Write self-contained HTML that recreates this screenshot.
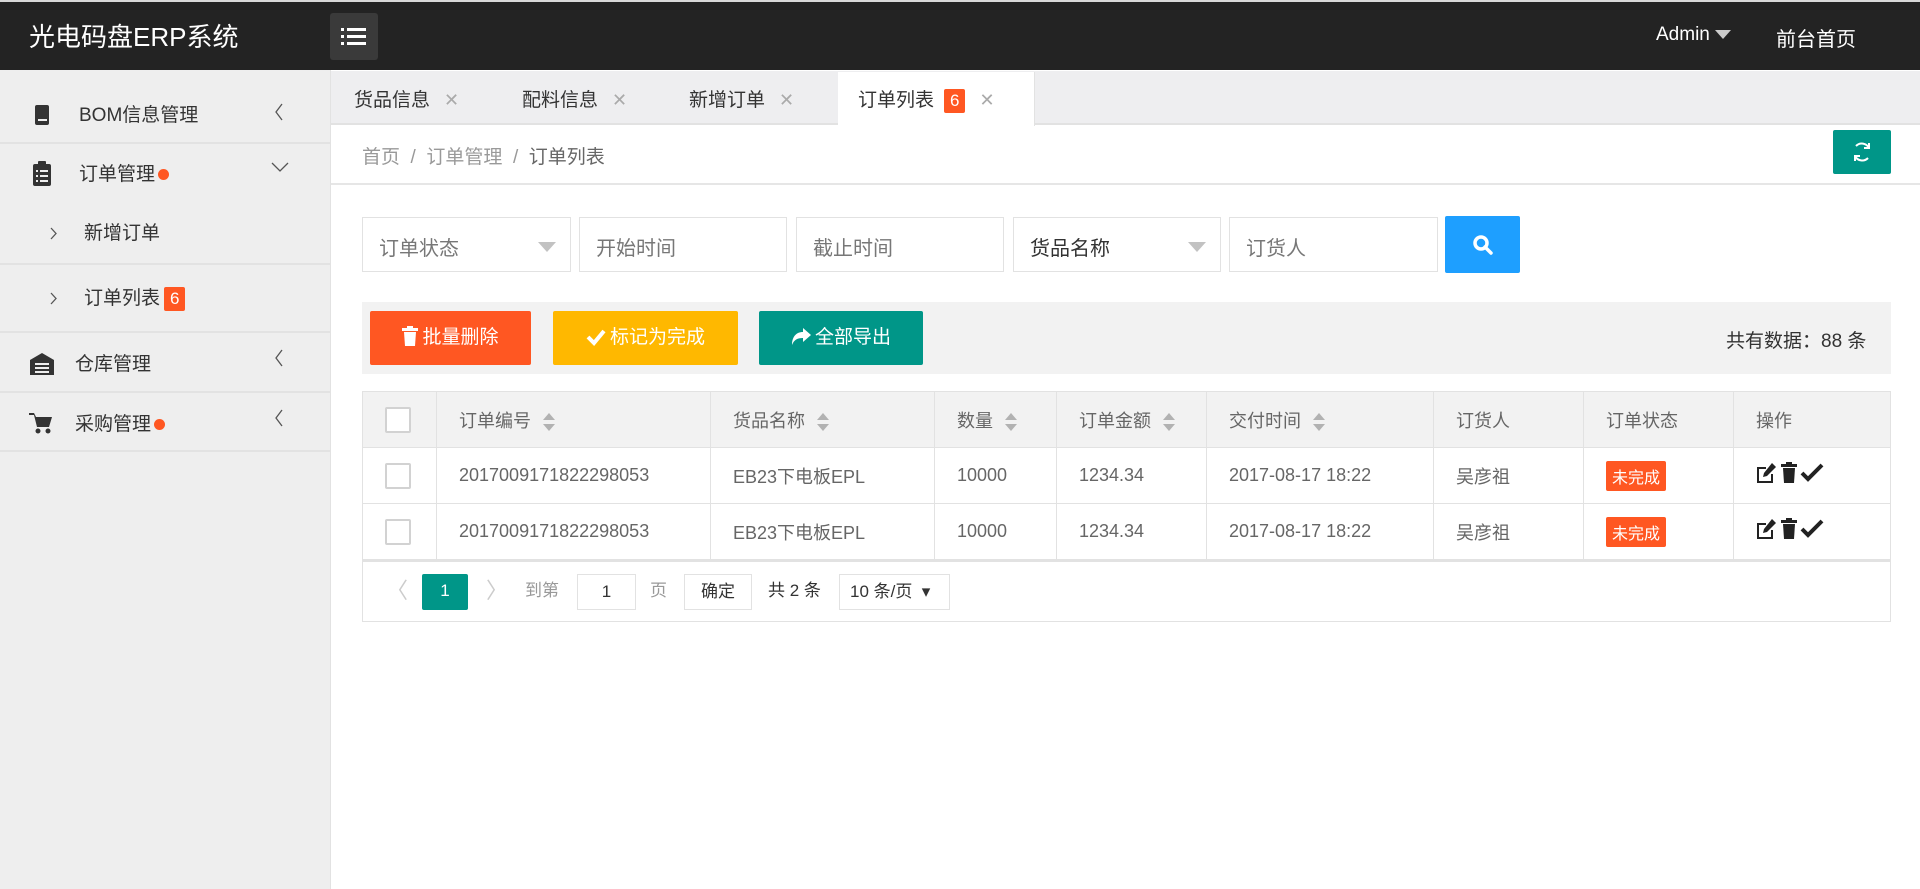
<!DOCTYPE html>
<html><head><meta charset="utf-8"><style>
*{box-sizing:border-box;margin:0;padding:0}
body{width:1920px;height:889px;overflow:hidden;background:#fff;font-family:"Liberation Sans","Noto Sans CJK SC",sans-serif;position:relative;color:#333}
.a{position:absolute}
.top{left:0;top:0;width:1920px;height:70px;background:#232323;border-top:2px solid #d8d8d8}
.side{left:0;top:70px;width:331px;height:819px;background:#eee;border-right:1px solid #e2e2e2}
.sep{position:absolute;left:0;width:331px;height:2px;background:#e2e2e2}
.si{position:absolute;font-size:19px;color:#333;line-height:24px}
.dot{display:inline-block;width:11px;height:11px;border-radius:50%;background:#ff5722;margin-left:3px;vertical-align:middle}
.bd{display:inline-block;background:#ff5722;color:#fff;border-radius:2px;padding:0 6px;font-size:17px;line-height:24px;margin-left:4px}
.tabs{left:331px;top:71px;width:1589px;height:54px;background:#eeeef0;border-bottom:2px solid #e2e2e2}
.tab{position:absolute;top:12px;font-size:19px;color:#333}
.x{color:#aaa;margin-left:14px;font-size:18px}
.inp{position:absolute;top:217px;height:55px;border:1px solid #e2e2e2;font-size:20px;color:#777;padding:14px 0 0 16px}
.tri{position:absolute;right:14px;top:24px;width:0;height:0;border-left:9px solid transparent;border-right:9px solid transparent;border-top:10px solid #c2c2c2}
.btn{position:absolute;top:311px;height:54px;color:#fff;font-size:19px;line-height:54px;text-align:center;border-radius:2px}
.btn svg{vertical-align:-3px;margin-right:4px}
table{border-collapse:collapse;position:absolute;left:362px;top:391px;width:1529px;font-size:18px;color:#666}
td,th{border:1px solid #e2e2e2;text-align:left;padding-left:22px;font-weight:normal;vertical-align:middle}
th{background:#f2f2f2;height:56px}
td{height:56px}
.cb{display:inline-block;width:26px;height:26px;border:2px solid #d2d2d2;border-radius:2px;background:#fff;vertical-align:middle}
.srt{display:inline-block;vertical-align:middle;margin-left:12px;width:12px;height:18px;position:relative}
.srt:before{content:"";position:absolute;top:0;left:0;border-left:6px solid transparent;border-right:6px solid transparent;border-bottom:7px solid #b2b2b2}
.srt:after{content:"";position:absolute;bottom:0;left:0;border-left:6px solid transparent;border-right:6px solid transparent;border-top:7px solid #b2b2b2}
.tag{display:inline-block;background:#ff5722;color:#fff;font-size:16px;padding:3px 6px;border-radius:2px}
.pg{position:absolute;top:574px;height:36px;line-height:34px;font-size:17px}
.chev{position:absolute}
</style></head><body>
<div class="a top"></div>
<div class="a" style="left:29px;top:17px;font-size:26px;color:#fff">光电码盘ERP系统</div>
<div class="a" style="left:330px;top:13px;width:48px;height:47px;background:#3a3a3a;border-radius:3px"></div>
<svg class="a" style="left:341px;top:26px" width="26" height="22" viewBox="0 0 26 22" fill="#fff"><rect x="0" y="2" width="3" height="3"/><rect x="6" y="2" width="19" height="3"/><rect x="0" y="9" width="3" height="3"/><rect x="6" y="9" width="19" height="3"/><rect x="0" y="16" width="3" height="3"/><rect x="6" y="16" width="19" height="3"/></svg>
<div class="a" style="left:1656px;top:24px;font-size:19px;color:#fff">Admin <span style="display:inline-block;border-left:8px solid transparent;border-right:8px solid transparent;border-top:9px solid #ccc;vertical-align:middle"></span></div>
<div class="a" style="left:1776px;top:23px;font-size:20px;color:#fff">前台首页</div>

<div class="a side">
<div class="sep" style="top:72px"></div>
<div class="sep" style="top:193px"></div>
<div class="sep" style="top:261px"></div>
<div class="sep" style="top:321px"></div>
<div class="sep" style="top:380px"></div>
</div>
<svg class="a" style="left:34px;top:104px" width="16" height="22" viewBox="0 0 16 22"><rect x="1" y="1" width="14" height="20" rx="2" fill="#333"/><rect x="4" y="15" width="9" height="2" fill="#eee"/></svg>
<div class="si" style="left:79px;top:104px">BOM信息管理</div>
<svg class="chev" style="left:274px;top:103px" width="10" height="18" viewBox="0 0 10 18" fill="none" stroke="#555" stroke-width="1.3"><path d="M8 1 L2 9 L8 17"/></svg>
<svg class="a" style="left:32px;top:160px" width="20" height="26" viewBox="0 0 20 26"><rect x="1" y="4" width="18" height="22" rx="2" fill="#333"/><rect x="6" y="1" width="8" height="6" rx="1" fill="#333"/><g fill="#eee"><rect x="4" y="10" width="2" height="2"/><rect x="8" y="10" width="8" height="2"/><rect x="4" y="15" width="2" height="2"/><rect x="8" y="15" width="8" height="2"/><rect x="4" y="20" width="2" height="2"/><rect x="8" y="20" width="8" height="2"/></g></svg>
<div class="si" style="left:79px;top:163px">订单管理<span class="dot"></span></div>
<svg class="chev" style="left:271px;top:162px" width="18" height="10" viewBox="0 0 18 10" fill="none" stroke="#555" stroke-width="1.3"><path d="M1 1 L9 9 L17 1"/></svg>
<svg class="chev" style="left:50px;top:227px" width="7" height="13" viewBox="0 0 7 13" fill="none" stroke="#555" stroke-width="1.3"><path d="M1 1 L6 6.5 L1 12"/></svg>
<div class="si" style="left:84px;top:222px">新增订单</div>
<svg class="chev" style="left:50px;top:292px" width="7" height="13" viewBox="0 0 7 13" fill="none" stroke="#555" stroke-width="1.3"><path d="M1 1 L6 6.5 L1 12"/></svg>
<div class="si" style="left:84px;top:287px">订单列表<span class="bd">6</span></div>
<svg class="a" style="left:29px;top:352px" width="26" height="24" viewBox="0 0 26 24"><path d="M1 8 L13 1 L25 8 V23 H1Z" fill="#333"/><g fill="#eee"><rect x="6" y="11" width="14" height="2"/><rect x="6" y="15" width="14" height="2"/><rect x="6" y="19" width="14" height="2"/></g></svg>
<div class="si" style="left:75px;top:353px">仓库管理</div>
<svg class="chev" style="left:274px;top:349px" width="10" height="18" viewBox="0 0 10 18" fill="none" stroke="#555" stroke-width="1.3"><path d="M8 1 L2 9 L8 17"/></svg>
<svg class="a" style="left:29px;top:411px" width="24" height="24" viewBox="0 0 24 24"><path d="M0 2 H5 L7 6 H23 L20 16 H8 L5 4 H0Z" fill="#333"/><circle cx="9" cy="20" r="2.5" fill="#333"/><circle cx="19" cy="20" r="2.5" fill="#333"/></svg>
<div class="si" style="left:75px;top:413px">采购管理<span class="dot"></span></div>
<svg class="chev" style="left:274px;top:409px" width="10" height="18" viewBox="0 0 10 18" fill="none" stroke="#555" stroke-width="1.3"><path d="M8 1 L2 9 L8 17"/></svg>

<div class="a tabs"></div>
<div class="a" style="left:838px;top:72px;width:197px;height:54px;background:#fff;border-right:1px solid #e2e2e2"></div>
<div class="tab a" style="left:354px;top:85px">货品信息<span class="x">✕</span></div>
<div class="tab a" style="left:522px;top:85px">配料信息<span class="x">✕</span></div>
<div class="tab a" style="left:689px;top:85px">新增订单<span class="x">✕</span></div>
<div class="tab a" style="left:858px;top:85px">订单列表<span class="bd" style="margin-left:10px">6</span><span class="x">✕</span></div>

<div class="a" style="left:362px;top:142px;font-size:19px;color:#999">首页 &nbsp;/ &nbsp;订单管理 &nbsp;/ &nbsp;<span style="color:#666">订单列表</span></div>
<div class="a" style="left:331px;top:183px;width:1589px;height:2px;background:#e6e6e6"></div>
<div class="a" style="left:1833px;top:130px;width:58px;height:44px;background:#009688;border-radius:2px"></div>
<svg class="a" style="left:1850px;top:140px" width="24" height="24" viewBox="0 0 24 24" fill="none" stroke="#fff" stroke-width="2"><path d="M6 6 A8 8 0 0 1 19 8"/><path d="M18 18 A8 8 0 0 1 5 16"/><path d="M19 3 V8 H14"/><path d="M5 21 V16 H10"/></svg>

<div class="inp" style="left:362px;width:209px">订单状态<span class="tri"></span></div>
<div class="inp" style="left:579px;width:208px">开始时间</div>
<div class="inp" style="left:796px;width:208px">截止时间</div>
<div class="inp" style="left:1013px;width:208px;color:#333">货品名称<span class="tri"></span></div>
<div class="inp" style="left:1229px;width:209px">订货人</div>
<div class="a" style="left:1445px;top:216px;width:75px;height:57px;background:#1e9fff;border-radius:2px"></div>
<svg class="a" style="left:1472px;top:234px" width="22" height="22" viewBox="0 0 22 22" fill="none" stroke="#fff" stroke-width="3.5"><circle cx="9" cy="9" r="6"/><path d="M13 13 L19 19" stroke-linecap="round"/></svg>

<div class="a" style="left:362px;top:302px;width:1529px;height:72px;background:#f2f2f2"></div>
<div class="btn" style="left:370px;width:161px;background:#ff5722"><svg width="16" height="20" viewBox="0 0 16 20" fill="#fff"><rect x="0" y="2" width="16" height="3"/><rect x="5" y="0" width="6" height="3"/><path d="M2 6 H14 L13 20 H3Z"/></svg>批量删除</div>
<div class="btn" style="left:553px;width:185px;background:#ffb800"><svg width="20" height="18" viewBox="0 0 20 18" fill="none" stroke="#fff" stroke-width="4"><path d="M2 9 L8 15 L18 3"/></svg>标记为完成</div>
<div class="btn" style="left:759px;width:164px;background:#009688"><svg width="20" height="18" viewBox="0 0 20 18" fill="#fff"><path d="M12 0 L20 7 L12 14 V10 C6 10 3 12 1 17 C1 9 5 4 12 4Z"/></svg>全部导出</div>
<div class="a" style="left:1726px;top:326px;font-size:19px;color:#333">共有数据：88 条</div>

<table>
<colgroup><col style="width:74px"><col style="width:274px"><col style="width:224px"><col style="width:122px"><col style="width:150px"><col style="width:227px"><col style="width:150px"><col style="width:150px"><col></colgroup>
<tr><th><span class="cb"></span></th><th>订单编号<span class="srt"></span></th><th>货品名称<span class="srt"></span></th><th>数量<span class="srt"></span></th><th>订单金额<span class="srt"></span></th><th>交付时间<span class="srt"></span></th><th>订货人</th><th>订单状态</th><th>操作</th></tr>
<tr><td><span class="cb"></span></td><td>2017009171822298053</td><td>EB23下电板EPL</td><td>10000</td><td>1234.34</td><td>2017-08-17 18:22</td><td>吴彦祖</td><td><span class="tag">未完成</span></td><td><svg width="70" height="22" viewBox="0 0 70 22" fill="#222"><path d="M1 5 H10 V7 H3 V19 H15 V12 H17 V21 H1Z"/><path d="M16 1 L20 5 L11 14 L7 15 L8 11Z"/><rect x="25" y="2" width="16" height="3"/><rect x="30" y="0" width="6" height="3"/><path d="M27 6 H39 L38 21 H28Z"/><path d="M46 11 L52 17 L66 3" stroke="#222" stroke-width="4" fill="none"/></svg></td></tr>
<tr><td><span class="cb"></span></td><td>2017009171822298053</td><td>EB23下电板EPL</td><td>10000</td><td>1234.34</td><td>2017-08-17 18:22</td><td>吴彦祖</td><td><span class="tag">未完成</span></td><td><svg width="70" height="22" viewBox="0 0 70 22" fill="#222"><path d="M1 5 H10 V7 H3 V19 H15 V12 H17 V21 H1Z"/><path d="M16 1 L20 5 L11 14 L7 15 L8 11Z"/><rect x="25" y="2" width="16" height="3"/><rect x="30" y="0" width="6" height="3"/><path d="M27 6 H39 L38 21 H28Z"/><path d="M46 11 L52 17 L66 3" stroke="#222" stroke-width="4" fill="none"/></svg></td></tr>
</table>
<div class="a" style="left:362px;top:560px;width:1529px;height:62px;border:1px solid #e2e2e2;border-top:2px solid #e2e2e2"></div>
<div class="pg" style="left:386px;color:#ccc;font-size:22px">〈</div>
<div class="pg" style="left:422px;width:46px;background:#009688;color:#fff;text-align:center;border-radius:2px">1</div>
<div class="pg" style="left:486px;color:#ccc;font-size:22px">〉</div>
<div class="pg" style="left:525px;color:#999">到第</div>
<div class="pg" style="left:577px;width:59px;border:1px solid #e2e2e2;text-align:center;color:#333">1</div>
<div class="pg" style="left:650px;color:#999">页</div>
<div class="pg" style="left:684px;width:68px;border:1px solid #e2e2e2;text-align:center;color:#333">确定</div>
<div class="pg" style="left:768px;color:#333">共 2 条</div>
<div class="pg" style="left:839px;width:111px;border:1px solid #e2e2e2;padding-left:10px;color:#333">10 条/页 &nbsp;▾</div>
</body></html>
